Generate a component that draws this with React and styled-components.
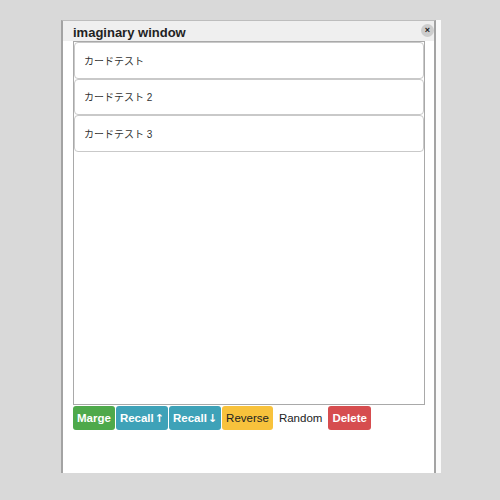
import styled, { createGlobalStyle } from 'styled-components';

const GlobalStyle = createGlobalStyle`
	body {
		margin: 0;
		background: #d9d9d9;
		font-family: 'Liberation Sans', 'Noto Sans CJK JP', sans-serif;
	}
`;

const Desktop = styled.div`
	width: 500px;
	height: 500px;
	padding: 20px 0 0 61px;
	box-sizing: border-box;
`;

const Win = styled.div`
	width: 375px;
	height: 453px;
	box-sizing: border-box;
	background: #fff;
	border-left: 2px solid #a3a3a3;
	border-right: 2px solid #a3a3a3;
	border-top: 1px solid #bdbdbd;
	box-shadow: 5px 0 0 #fafafa;
	display: flex;
	flex-direction: column;
`;

const TitleBar = styled.div`
	height: 20px;
	background: #efefef;
	display: flex;
	align-items: center;
	justify-content: space-between;
	padding: 0 0 0 10px;
`;

const Title = styled.div`
	font-size: 13px;
	font-weight: 700;
	color: #222;
	padding-top: 3px;
`;

const CloseBtn = styled.button`
	width: 13px;
	height: 13px;
	border-radius: 50%;
	border: none;
	padding: 0;
	background: #cdcdcd;
	color: #222;
	font-size: 9px;
	font-weight: 700;
	line-height: 13px;
	display: flex;
	align-items: center;
	justify-content: center;
	margin-top: -2px;
`;

const Body = styled.div`
	padding: 0 9px 0 10px;
	display: flex;
	flex-direction: column;
`;

const List = styled.div`
	height: 364px;
	box-sizing: border-box;
	border: 1px solid #a9a9a9;
	display: flex;
	flex-direction: column;
`;

const Card = styled.div`
	height: 36.5px;
	flex-shrink: 0;
	box-sizing: border-box;
	border: 1px solid #c9c9c9;
	border-radius: 4px;
	padding: 0 9px;
	display: flex;
	align-items: center;
	font-size: 10px;
	color: #333;
`;

const Toolbar = styled.div`
	display: flex;
	align-items: center;
	margin-top: 1px;
`;

const palette = {
	green: ['#4ea94b', '#fff'],
	teal: ['#3ea2b8', '#fff'],
	yellow: ['#f8c23c', '#222'],
	plain: ['transparent', '#222'],
	red: ['#d64d4f', '#fff'],
};

const Btn = styled.button`
	height: 24px;
	box-sizing: border-box;
	border: none;
	border-radius: 3px;
	padding: 0 ${(p) => (p.$tone === 'plain' ? '5px' : '4px')};
	margin-right: 1px;
	background: ${(p) => palette[p.$tone][0]};
	color: ${(p) => palette[p.$tone][1]};
	font-family: 'Liberation Sans', sans-serif;
	font-size: 11.5px;
	font-weight: ${(p) => (p.$tone === 'plain' || p.$tone === 'yellow' ? 400 : 700)};
	white-space: nowrap;
`;

const Arrow = styled.span`
	font-family: 'DejaVu Sans', sans-serif;
	font-size: 11px;
	font-weight: 700;
	margin-left: 1px;
`;

export default function App() {
	return (
		<>
			<GlobalStyle />
			<Desktop>
				<Win>
					<TitleBar>
						<Title>imaginary window</Title>
						<CloseBtn>×</CloseBtn>
					</TitleBar>
					<Body>
						<List>
							<Card>カードテスト</Card>
							<Card>カードテスト 2</Card>
							<Card>カードテスト 3</Card>
						</List>
						<Toolbar>
							<Btn $tone='green'>Marge</Btn>
							<Btn $tone='teal'>Recall<Arrow>↑</Arrow></Btn>
							<Btn $tone='teal'>Recall<Arrow>↓</Arrow></Btn>
							<Btn $tone='yellow'>Reverse</Btn>
							<Btn $tone='plain'>Random</Btn>
							<Btn $tone='red'>Delete</Btn>
						</Toolbar>
					</Body>
				</Win>
			</Desktop>
		</>
	);
}
